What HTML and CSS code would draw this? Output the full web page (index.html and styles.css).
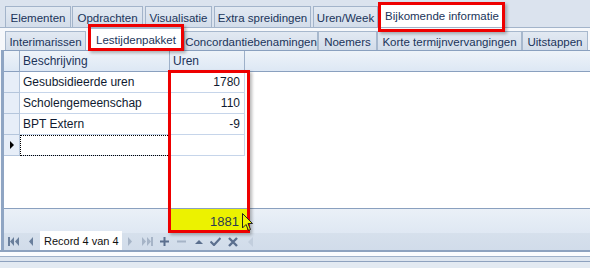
FILE: index.html
```html
<!DOCTYPE html>
<html>
<head>
<meta charset="utf-8">
<link rel="stylesheet" href="styles.css">
</head>
<body>
<div class="app">
  <div class="tabs1">
    <div class="tab t-el">Elementen</div>
    <div class="tab t-op">Opdrachten</div>
    <div class="tab t-vi">Visualisatie</div>
    <div class="tab t-ex">Extra spreidingen</div>
    <div class="tab t-uw">Uren/Week</div>
    <div class="tab sel t-bi">Bijkomende informatie</div>
  </div>
  <div class="panel">
    <div class="tabs2">
      <div class="tab t-in">Interimarissen</div>
      <div class="tab sel t-le">Lestijdenpakket</div>
      <div class="tab t-co">Concordantiebenamingen</div>
      <div class="tab t-no">Noemers</div>
      <div class="tab t-ko">Korte termijnvervangingen</div>
      <div class="tab t-ui">Uitstappen</div>
    </div>
    <div class="grid">
      <div class="row hdr">
        <div class="ind"></div>
        <div class="c1">Beschrijving</div>
        <div class="c2">Uren</div>
        <div class="rest"></div>
      </div>
      <div class="row">
        <div class="ind"></div>
        <div class="c1">Gesubsidieerde uren</div>
        <div class="c2 num">1780</div>
      </div>
      <div class="row">
        <div class="ind"></div>
        <div class="c1">Scholengemeenschap</div>
        <div class="c2 num">110</div>
      </div>
      <div class="row">
        <div class="ind"></div>
        <div class="c1">BPT Extern</div>
        <div class="c2 num">-9</div>
      </div>
      <div class="row cur">
        <div class="ind"><svg width="6" height="8" viewBox="0 0 6 8"><path d="M1 0 L5 4 L1 8 Z" fill="#000"/></svg></div>
        <div class="c1 focus"></div>
        <div class="c2 num"></div>
      </div>
      <div class="empty"></div>
      <div class="footer">
        <div class="fpad"></div>
        <div class="fsum">1881</div>
      </div>
      <div class="nav">
        <span class="ic"><svg width="11" height="9" viewBox="0 0 11 9"><rect x="0" y="0" width="2" height="9" fill="#6a7f9c"/><path d="M6 0 L2 4.5 L6 9 Z M11 0 L7 4.5 L11 9 Z" fill="#6a7f9c"/></svg></span>
        <span class="ic"><svg width="5" height="9" viewBox="0 0 5 9"><path d="M5 0 L1 4.5 L5 9 Z" fill="#6a7f9c"/></svg></span>
        <span class="rec">Record 4 van 4</span>
        <span class="ic"><svg width="5" height="9" viewBox="0 0 5 9"><path d="M0 0 L4 4.5 L0 9 Z" fill="#a6b4c7"/></svg></span>
        <span class="ic"><svg width="11" height="9" viewBox="0 0 11 9"><path d="M0 0 L4 4.5 L0 9 Z M5 0 L9 4.5 L5 9 Z" fill="#a6b4c7"/><rect x="9" y="0" width="2" height="9" fill="#a6b4c7"/></svg></span>
        <span class="ic"><svg width="9" height="9" viewBox="0 0 9 9"><path d="M3.5 0 H5.5 V3.5 H9 V5.5 H5.5 V9 H3.5 V5.5 H0 V3.5 H3.5 Z" fill="#5b6f8e"/></svg></span>
        <span class="ic"><svg width="9" height="9" viewBox="0 0 9 9"><rect x="0" y="3.5" width="9" height="2" fill="#a6b4c7"/></svg></span>
        <span class="ic"><svg width="8" height="9" viewBox="0 0 8 9"><path d="M0 7 L4 3 L8 7 Z" fill="#5b6f8e"/></svg></span>
        <span class="ic"><svg width="11" height="9" viewBox="0 0 11 9"><path d="M0.5 4.5 L4 8 L10.5 1" stroke="#5b6f8e" stroke-width="2.2" fill="none"/></svg></span>
        <span class="ic"><svg width="10" height="10" viewBox="0 0 10 10"><path d="M1 1 L9 9 M9 1 L1 9" stroke="#5b6f8e" stroke-width="2.4"/></svg></span>
        <span class="ic"><svg width="6" height="10" viewBox="0 0 6 10"><path d="M6 0 L1 5 L6 10 Z" fill="#c2cedd"/></svg></span>
      </div>
    </div>
    <div class="bottom"></div>
  </div>

  <div class="mark mark-tab1"></div>
  <div class="mark mark-tab2"></div>
  <div class="mark mark-col"></div>
  <svg class="cursor" width="11" height="19" viewBox="0 0 11 19"><path d="M0.5 0.5 L0.5 15 L4 11.5 L6.5 17.5 L8.5 16.5 L6 10.5 L10.5 10.5 Z" fill="#eef200" stroke="#222" stroke-width="1"/></svg>
</div>
</body>
</html>
```

FILE: styles.css
```css
html, body {
  margin: 0;
  padding: 0;
}

.app {
  position: relative;
  width: 590px;
  height: 268px;
  overflow: hidden;
  background: #dbe3ee;
  font-family: "Liberation Sans", Arial, sans-serif;
  font-size: 12px;
  color: #1c3358;
}

.tabs1 {
  display: flex;
  align-items: flex-end;
  height: 27px;
  padding-left: 5px;
  box-sizing: border-box;
}

.tab {
  box-sizing: border-box;
  display: flex;
  align-items: center;
  justify-content: center;
  white-space: nowrap;
  font-size: 11.5px;
  color: #1a345a;
  border: 1px solid #a3b4ca;
  border-bottom: none;
  background: linear-gradient(#e2e9f2, #d3ddea);
}

.tabs1 .tab {
  height: 21px;
  margin-right: 2px;
  padding-top: 1px;
}

.t-el { width: 66px; margin-right: 1px !important; }
.t-op { width: 71px; }
.t-vi { width: 67px; }
.t-ex { width: 97px; }
.t-uw { width: 65px; }
.tabs1 .t-bi {
  width: 124px;
  height: 24px;
  background: #fff;
  border-color: #a3b4ca;
  padding-top: 0;
}

.panel {
  background: #f6f8fb;
  border-top: 1px solid #a3b4ca;
  padding-top: 1px;
}

.tabs2 {
  display: flex;
  align-items: flex-end;
  height: 21px;
  padding-left: 5px;
}

.tabs2 .tab {
  height: 19px;
  padding-top: 1px;
  border-color: #a7b8cd;
}

.t-in { width: 81px; margin-right: 2px; }
.t-le { width: 96px; }
.t-co { width: 134px; }
.t-no { width: 59px; }
.t-ko { width: 145px; }
.t-ui { width: 66px; }
.tabs2 .t-le {
  height: 22px;
  background: #fff;
}

.grid {
  background: #fff;
  border-left: 3px solid #8fa5c3;
  margin-left: 1px;
  display: flex;
  flex-direction: column;
}

.row {
  display: grid;
  grid-template-columns: 16px 150px 75px;
  height: 21px;
  color: #0f1a30;
}

.row > div {
  box-sizing: border-box;
  border-right: 1px solid #c6d5ea;
  border-bottom: 1px solid #c6d5ea;
  display: flex;
  align-items: center;
  padding: 0 3px;
}

.row .ind {
  background: #e7eef8;
  padding: 0;
  justify-content: center;
  border-color: #b5c6dc;
}

.row .num {
  justify-content: flex-end;
  padding-right: 4px;
}

.row.hdr {
  grid-template-columns: 16px 150px 75px 1fr;
  height: 21px;
  background: linear-gradient(#eef3f9, #dce7f4);
  border-top: 1px solid #8aa0bf;
  color: #1c3358;
}

.row.hdr > div {
  border-right: 1px solid #9db0c9;
  border-bottom: 1px solid #8aa0bf;
}

.row.hdr .ind {
  background: transparent;
}

.row.hdr .rest {
  border-right: none;
}

.row .focus {
  outline: 1px dotted #000;
  outline-offset: -1px;
}

.empty {
  height: 52px;
}

.footer {
  display: flex;
  height: 24px;
  border-top: 1px solid #8aa0bf;
  background: linear-gradient(#eaf0f7, #dfe8f3);
}

.fpad {
  width: 166px;
}

.fsum {
  width: 78px;
  background: #ecf200;
  display: flex;
  align-items: center;
  justify-content: flex-end;
  padding-right: 9px;
  box-sizing: border-box;
  color: #2a3a52;
  font-size: 13px;
}

.nav {
  display: flex;
  align-items: center;
  height: 17px;
  background: linear-gradient(#d6e0ec, #d1dcea);
  padding-left: 1px;
}

.nav .ic {
  flex: none;
  display: flex;
  align-items: center;
  justify-content: center;
  width: 17px;
  height: 17px;
}

.nav .rec {
  flex: none;
  background: #fff;
  height: 19px;
  margin-top: -2px;
  margin-left: 1px;
  display: flex;
  align-items: center;
  padding-left: 4px;
  width: 82px;
  box-sizing: border-box;
  white-space: nowrap;
  overflow: hidden;
  font-size: 11px;
  color: #111;
}

.bottom {
  height: 19px;
  margin-left: -1px;
  background:
    linear-gradient(#8da2bf 0, #8da2bf 2px,
      #fbfcfe 2px, #fbfcfe 6px,
      #9fb1c9 6px, #9fb1c9 7px,
      #dde5ef 7px, #dde5ef 11px,
      #8ea2bf 11px, #8ea2bf 12px,
      #e3eaf2 12px, #e3eaf2 18px,
      #a4b5cb 18px, #a4b5cb 19px);
}

.mark {
  position: absolute;
  box-sizing: border-box;
  border: 3px solid #ee0000;
  box-shadow: 2px 2px 3px rgba(0, 0, 0, 0.28);
  pointer-events: none;
}

.mark-tab1 {
  left: 378px;
  top: 2px;
  width: 127px;
  height: 30px;
}

.mark-tab2 {
  left: 88px;
  top: 24px;
  width: 96px;
  height: 27px;
}

.mark-col {
  left: 168px;
  top: 70px;
  width: 82px;
  height: 163px;
}

.cursor {
  position: absolute;
  left: 242px;
  top: 213px;
}
```
